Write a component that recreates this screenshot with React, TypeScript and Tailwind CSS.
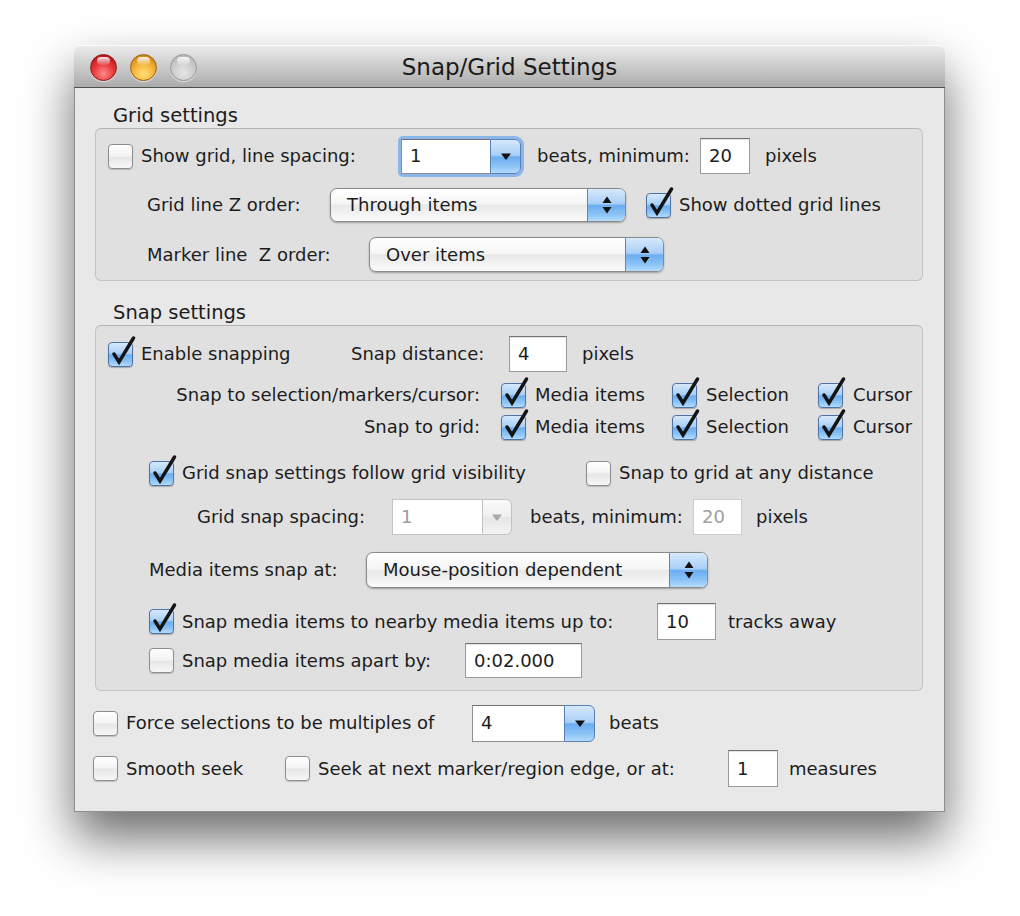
import React from 'react';

const aqua =
  'bg-[linear-gradient(to_bottom,#d6e9fc_0%,#a9cff6_46%,#6badf0_52%,#8cc4f7_80%,#b4dcfd_100%)]';

function Check({ checked = false, className = '' }: { checked?: boolean; className?: string }) {
  return (
    <div className={`relative shrink-0 w-[25px] h-[25px] ${className}`}>
      {checked ? (
        <div className={`w-full h-full rounded-[4px] border border-[#4f73a3] ${aqua} shadow-[0_1px_1px_rgba(0,0,0,0.25)]`} />
      ) : (
        <div className="w-full h-full rounded-[4px] border border-[#8d8d8d] bg-[linear-gradient(to_bottom,#ffffff_0%,#f3f3f3_48%,#e6e6e6_52%,#f7f7f7_100%)] shadow-[0_1px_1px_rgba(0,0,0,0.18)]" />
      )}
      {checked && (
        <svg className="absolute left-0 -top-[6px]" width="30" height="32" viewBox="0 0 30 32">
          <path d="M6 18 L11 26 L25.5 2" fill="none" stroke="#141414" strokeWidth="3.4" strokeLinejoin="miter" strokeLinecap="round" />
        </svg>
      )}
    </div>
  );
}

function Label({ children, className = '' }: { children: React.ReactNode; className?: string }) {
  return <span className={`shrink-0 whitespace-pre leading-none ${className}`}>{children}</span>;
}

function Popup({ value, className = '' }: { value: string; className?: string }) {
  return (
    <div
      className={`shrink-0 flex items-stretch rounded-[7px] border border-[#8a8a8a] overflow-hidden bg-[linear-gradient(to_bottom,#ffffff_0%,#f5f5f5_46%,#e8e8e8_52%,#fbfbfb_100%)] shadow-[0_1px_2px_rgba(0,0,0,0.3)] ${className}`}
    >
      <div className="flex-1 flex items-center pl-[16px] leading-none">{value}</div>
      <div className={`w-[38px] flex items-center justify-center border-l border-[#5f86bb] ${aqua}`}>
        <svg width="12" height="22" viewBox="0 0 12 22">
          <path d="M1.5 9 L6 2.5 L10.5 9 Z" fill="#111" />
          <path d="M1.5 13 L10.5 13 L6 19.5 Z" fill="#111" />
        </svg>
      </div>
    </div>
  );
}

function Combo({
  value,
  className = '',
  focused = false,
  disabled = false,
}: {
  value: string;
  className?: string;
  focused?: boolean;
  disabled?: boolean;
}) {
  return (
    <div
      className={`shrink-0 flex items-stretch rounded-r-[6px] ${focused ? 'rounded-l-[2px] shadow-[0_0_0_3px_#8ab6ea]' : ''} ${className}`}
    >
      <div
        className={`flex-1 flex items-center pl-[8px] leading-none bg-white border border-r-0 ${disabled ? 'border-[#c4c4c4] text-[#9c9c9c]' : 'border-[#8e8e8e] border-t-[#6e6e6e]'}`}
      >
        {value}
      </div>
      {disabled ? (
        <div className="w-[30px] flex items-center justify-center rounded-r-[6px] border border-[#c2c2c2] bg-[linear-gradient(to_bottom,#fafafa_0%,#f0f0f0_48%,#e6e6e6_52%,#f4f4f4_100%)]">
          <svg width="12" height="9" viewBox="0 0 12 9">
            <path d="M1 1.5 L11 1.5 L6 8 Z" fill="#a8a8a8" />
          </svg>
        </div>
      ) : (
        <div className={`w-[31px] flex items-center justify-center rounded-r-[6px] border border-[#5a7fb5] ${aqua}`}>
          <svg width="12" height="9" viewBox="0 0 12 9">
            <path d="M1 1.5 L11 1.5 L6 8 Z" fill="#111" />
          </svg>
        </div>
      )}
    </div>
  );
}

function Field({ value, className = '', disabled = false }: { value: string; className?: string; disabled?: boolean }) {
  return (
    <div
      className={`shrink-0 flex items-center pl-[8px] leading-none bg-white border ${disabled ? 'border-[#cdcdcd] text-[#a0a0a0]' : 'border-[#9a9a9a] border-t-[#707070] shadow-[inset_0_1px_1px_rgba(0,0,0,0.12)]'} ${className}`}
    >
      {value}
    </div>
  );
}

function Light({ tone }: { tone: 'red' | 'orange' | 'gray' }) {
  const body =
    tone === 'red'
      ? 'bg-[radial-gradient(circle_at_50%_75%,#ff8a8a_0%,#e8393b_45%,#b01518_85%,#8a0d0f_100%)] border-[#8e1a1a]'
      : tone === 'orange'
        ? 'bg-[radial-gradient(circle_at_50%_75%,#ffe07a_0%,#f5b43a_45%,#d0800f_85%,#a46008_100%)] border-[#9c6310]'
        : 'bg-[radial-gradient(circle_at_50%_70%,#e6e6e6_0%,#c9c9c9_55%,#a9a9a9_100%)] border-[#9a9a9a]';
  return (
    <div className={`relative w-[27px] h-[27px] rounded-full border ${body} shadow-[0_1px_1px_rgba(255,255,255,0.6)]`}>
      <div className="absolute left-[6px] top-[2px] w-[13px] h-[8px] rounded-full bg-[linear-gradient(to_bottom,rgba(255,255,255,0.9),rgba(255,255,255,0.1))]" />
    </div>
  );
}

export default function App() {
  return (
    <div className="min-h-screen bg-white font-['DejaVu_Sans',sans-serif] text-[18px] text-[#1c1c1c] pt-[45px] pl-[74px] pb-[60px]">
      <div className="w-[871px] h-[767px] flex flex-col rounded-t-[6px] shadow-[0_26px_50px_rgba(0,0,0,0.58)]">
        {/* title bar */}
        <div className="h-[43px] shrink-0 flex items-center rounded-t-[6px] border-b border-[#4f4f4f] bg-[linear-gradient(to_bottom,#ececec_0%,#d2d2d2_40%,#ababab_100%)] shadow-[inset_0_1px_0_rgba(255,255,255,0.8)]">
          <div className="flex items-center gap-[13px] pl-[16px] pt-[2px]">
            <Light tone="red" />
            <Light tone="orange" />
            <Light tone="gray" />
          </div>
          <div className="flex-1 text-center text-[23px] leading-none text-[#1a1a1a] pr-[123px] pt-[3px]">Snap/Grid Settings</div>
        </div>

        <div className="flex-1 flex flex-col bg-[#e8e8e8] border-x border-b border-[#8e8e8e]">
          <div className="mt-[17px] h-[22px] pl-[38px] flex items-center text-[19.5px] leading-none">Grid settings</div>

          <div className="mt-[1px] ml-[20px] w-[828px] h-[153px] shrink-0 rounded-[6px] border border-[#c3c3c3] border-t-[#b4b4b4] bg-[#e0e0e0] flex flex-col">
            <div className="mt-[9px] h-[36px] flex items-center">
              <Check className="ml-[12px]" />
              <Label className="ml-[8px] w-[259px]">Show grid, line spacing:</Label>
              <Combo value="1" focused className="w-[120px] h-[35px] ml-[1px]" />
              <Label className="ml-[16px] w-[163px]">beats, minimum:</Label>
              <Field value="20" className="w-[50px] h-[36px]" />
              <Label className="ml-[15px]">pixels</Label>
            </div>
            <div className="mt-[14px] h-[34px] flex items-center">
              <Label className="ml-[51px] w-[183px]">Grid line Z order:</Label>
              <Popup value="Through items" className="w-[296px] h-[34px]" />
              <Check checked className="ml-[20px]" />
              <Label className="ml-[8px]">Show dotted grid lines</Label>
            </div>
            <div className="mt-[15px] h-[35px] flex items-center">
              <Label className="ml-[51px] w-[222px]">Marker line  Z order:</Label>
              <Popup value="Over items" className="w-[295px] h-[35px]" />
            </div>
          </div>

          <div className="mt-[21px] h-[22px] pl-[38px] flex items-center text-[19.5px] leading-none">Snap settings</div>

          <div className="mt-[1px] ml-[20px] w-[828px] h-[366px] shrink-0 rounded-[6px] border border-[#c3c3c3] border-t-[#b4b4b4] bg-[#e0e0e0] flex flex-col">
            <div className="mt-[10px] h-[36px] flex items-center">
              <Check checked className="ml-[12px]" />
              <Label className="ml-[8px] w-[210px]">Enable snapping</Label>
              <Label className="w-[158px]">Snap distance:</Label>
              <Field value="4" className="w-[58px] h-[36px]" />
              <Label className="ml-[15px]">pixels</Label>
            </div>
            <div className="mt-[10px] h-[26px] flex items-center">
              <Label className="w-[384px] text-right">Snap to selection/markers/cursor:</Label>
              <Check checked className="ml-[21px]" />
              <Label className="ml-[9px] w-[137px]">Media items</Label>
              <Check checked />
              <Label className="ml-[9px] w-[112px]">Selection</Label>
              <Check checked />
              <Label className="ml-[10px]">Cursor</Label>
            </div>
            <div className="mt-[6px] h-[26px] flex items-center">
              <Label className="w-[384px] text-right">Snap to grid:</Label>
              <Check checked className="ml-[21px]" />
              <Label className="ml-[9px] w-[137px]">Media items</Label>
              <Check checked />
              <Label className="ml-[9px] w-[112px]">Selection</Label>
              <Check checked />
              <Label className="ml-[10px]">Cursor</Label>
            </div>
            <div className="mt-[20px] h-[26px] flex items-center">
              <Check checked className="ml-[53px]" />
              <Label className="ml-[8px] w-[404px]">Grid snap settings follow grid visibility</Label>
              <Check />
              <Label className="ml-[8px]">Snap to grid at any distance</Label>
            </div>
            <div className="mt-[13px] h-[36px] flex items-center">
              <Label className="ml-[101px] w-[195px]">Grid snap spacing:</Label>
              <Combo value="1" disabled className="w-[120px] h-[36px]" />
              <Label className="ml-[18px] w-[163px]">beats, minimum:</Label>
              <Field value="20" disabled className="w-[49px] h-[36px]" />
              <Label className="ml-[14px]">pixels</Label>
            </div>
            <div className="mt-[17px] h-[36px] flex items-center">
              <Label className="ml-[53px] w-[217px]">Media items snap at:</Label>
              <Popup value="Mouse-position dependent" className="w-[342px] h-[36px]" />
            </div>
            <div className="mt-[15px] h-[37px] flex items-center">
              <Check checked className="ml-[53px]" />
              <Label className="ml-[8px] w-[475px]">Snap media items to nearby media items up to:</Label>
              <Field value="10" className="w-[59px] h-[37px]" />
              <Label className="ml-[12px]">tracks away</Label>
            </div>
            <div className="mt-[3px] h-[35px] flex items-center">
              <Check className="ml-[53px]" />
              <Label className="ml-[8px] w-[283px]">Snap media items apart by:</Label>
              <Field value="0:02.000" className="w-[117px] h-[35px]" />
            </div>
          </div>

          <div className="mt-[13px] h-[38px] flex items-center">
            <Check className="ml-[18px]" />
            <Label className="ml-[8px] w-[346px]">Force selections to be multiples of</Label>
            <Combo value="4" className="w-[123px] h-[37px]" />
            <Label className="ml-[14px]">beats</Label>
          </div>
          <div className="mt-[8px] h-[37px] flex items-center">
            <Check className="ml-[18px]" />
            <Label className="ml-[8px] w-[159px]">Smooth seek</Label>
            <Check />
            <Label className="ml-[8px] w-[410px]">Seek at next marker/region edge, or at:</Label>
            <Field value="1" className="w-[50px] h-[37px]" />
            <Label className="ml-[11px]">measures</Label>
          </div>
        </div>
      </div>
    </div>
  );
}
